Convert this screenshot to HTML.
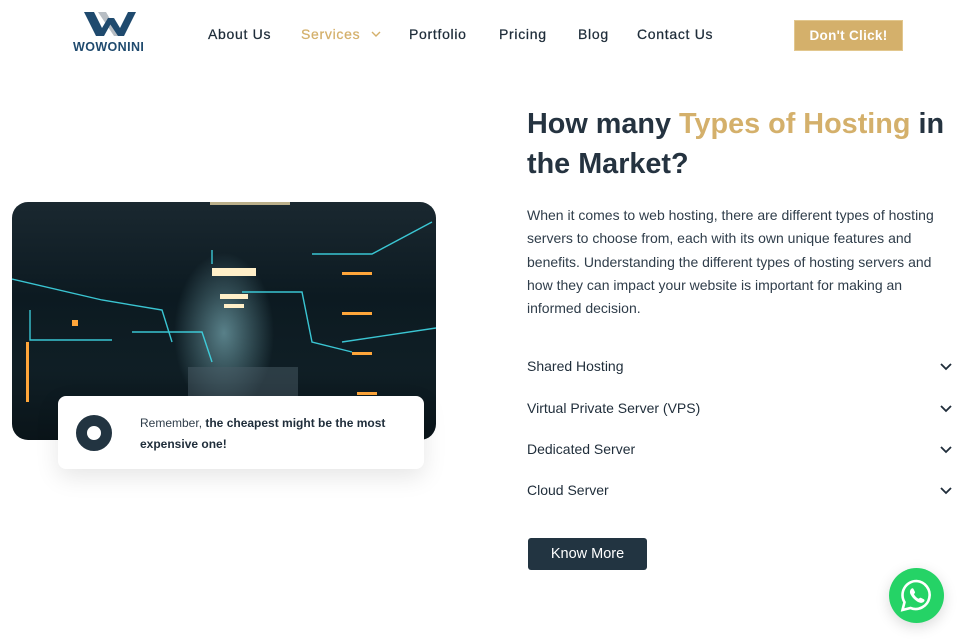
<!DOCTYPE html>
<html><head><meta charset="utf-8"><style>
*{margin:0;padding:0;box-sizing:border-box}
body{width:960px;height:640px;overflow:hidden;background:#fff;font-family:"Liberation Sans",sans-serif;position:relative;color:#1f2d3a}
.nav a{position:absolute;top:26px;font-size:14px;color:#1f2d3a;letter-spacing:.7px;text-decoration:none;-webkit-text-stroke:.25px #1f2d3a}
.btn{position:absolute;left:794px;top:20px;width:109px;height:31px;background:#d4b06b;border:1px solid #e2c78e;color:#fff;font-weight:bold;font-size:13.5px;text-align:center;line-height:30px;letter-spacing:.3px}
h1{position:absolute;left:527px;top:104px;font-size:28.8px;line-height:40px;font-weight:bold;color:#253340;width:430px}
h1 span{color:#d4b06b}
.p{position:absolute;left:527px;top:204px;width:410px;font-size:14px;line-height:23.3px;color:#2f3d4a}
.acc{position:absolute;left:527px;font-size:14px;color:#1f2d3a;width:425px}
.acc svg{position:absolute;right:0;top:5px}
.km{position:absolute;left:528px;top:538px;width:119px;height:32px;background:#223441;border-radius:3px;color:#fff;font-size:14.5px;text-align:center;line-height:32px}
.img{position:absolute;left:12px;top:202px;width:424px;height:238px;border-radius:16px;overflow:hidden;
background:radial-gradient(ellipse 50px 80px at 50% 55%,rgba(150,210,220,.55),transparent),linear-gradient(180deg,#1a2830 0%,#0c1a21 40%,#15293161 70%,#0a1419 100%),#0c181e}
.card{position:absolute;left:58px;top:396px;width:366px;height:73px;background:#fff;border-radius:8px;box-shadow:0 8px 24px rgba(0,0,0,.1)}
.wa{position:absolute;left:889px;top:568px;width:55px;height:55px;border-radius:50%;background:#25d366;box-shadow:0 4px 14px rgba(0,0,0,.15)}
</style></head><body>
<svg style="position:absolute;left:84px;top:12px" width="52" height="24" viewBox="0 0 52 24">
<polygon points="14,0 30,24 36,24 22,0" fill="#b8bec4"/>
<polygon points="0,0 10,0 18,16 24,6 30,6 20,24 12,24" fill="#1f4a6e"/>
<polygon points="26,12 30,6 36,16 44,0 52,0 40,24 34,24" fill="#1f4a6e"/>
</svg>
<div style="position:absolute;left:73px;top:40px;font-size:12.5px;font-weight:bold;color:#1f4a6e;letter-spacing:.4px">WOWONINI</div>
<div class="nav">
<a style="left:208px">About Us</a>
<a style="left:301px;color:#d4b06b;-webkit-text-stroke:.25px #d4b06b">Services</a>
<a style="left:409px">Portfolio</a>
<a style="left:499px">Pricing</a>
<a style="left:578px">Blog</a>
<a style="left:637px">Contact Us</a>
</div>
<svg style="position:absolute;left:371px;top:31px" width="10" height="7" viewBox="0 0 10 7"><path d="M1 1l4 4 4-4" stroke="#d4b06b" stroke-width="1.4" fill="none"/></svg>
<div class="btn">Don't Click!</div>
<div class="img">
<svg width="424" height="238" style="position:absolute;left:0;top:0">
<rect x="198" y="0" width="80" height="3" fill="#ffe8b0" opacity=".7"/>
<rect x="200" y="66" width="44" height="8" fill="#ffefc8"/>
<rect x="208" y="92" width="28" height="5" fill="#ffefc8"/>
<rect x="212" y="102" width="20" height="4" fill="#ffefc8"/>
<rect x="176" y="165" width="110" height="40" fill="#4a5c66" opacity=".5"/>
<g stroke="#3fd8e6" stroke-width="1.4" fill="none" opacity=".9">
<path d="M0 77 L90 98 L150 108 L160 140"/><path d="M18 108 L18 138 L100 138"/>
<path d="M300 52 L360 52 L420 20"/><path d="M330 140 L424 126"/>
<path d="M200 48 L200 62 M230 90 L290 90 L300 140 L340 150"/>
<path d="M120 130 L190 130 L200 160"/>
</g>
<g fill="#ffa63a">
<rect x="330" y="70" width="30" height="3"/><rect x="330" y="110" width="30" height="3"/><rect x="340" y="150" width="20" height="3"/>
<rect x="60" y="118" width="6" height="6"/><rect x="14" y="140" width="3" height="60"/><rect x="345" y="190" width="20" height="3"/>
</g>
</svg>
</div>
<div class="card">
<div style="position:absolute;left:18px;top:19px;width:36px;height:36px;border-radius:50%;border:11px solid #223441"></div>
<div style="position:absolute;left:82px;top:17px;font-size:12px;line-height:20.5px;color:#2f3d4a;width:270px">Remember, <b style="color:#1f2d3a">the cheapest might be the most expensive one!</b></div>
</div>
<h1>How many <span>Types of Hosting</span> in the Market?</h1>
<div class="p">When it comes to web hosting, there are different types of hosting servers to choose from, each with its own unique features and benefits. Understanding the different types of hosting servers and how they can impact your website is important for making an informed decision.</div>
<div class="acc" style="top:358px">Shared Hosting<svg width="12" height="8" viewBox="0 0 12 8"><path d="M1 1l5 5 5-5" stroke="#1f2d3a" stroke-width="1.8" fill="none"/></svg></div>
<div class="acc" style="top:400px">Virtual Private Server (VPS)<svg width="12" height="8" viewBox="0 0 12 8"><path d="M1 1l5 5 5-5" stroke="#1f2d3a" stroke-width="1.8" fill="none"/></svg></div>
<div class="acc" style="top:441px">Dedicated Server<svg width="12" height="8" viewBox="0 0 12 8"><path d="M1 1l5 5 5-5" stroke="#1f2d3a" stroke-width="1.8" fill="none"/></svg></div>
<div class="acc" style="top:482px">Cloud Server<svg width="12" height="8" viewBox="0 0 12 8"><path d="M1 1l5 5 5-5" stroke="#1f2d3a" stroke-width="1.8" fill="none"/></svg></div>
<div class="km">Know More</div>
<div class="wa"><svg width="55" height="55" viewBox="0 0 55 55">
<path d="M27.5 13a14 14 0 0 0-12 21.2L13.5 42l8-2a14 14 0 1 0 6-27z" fill="none" stroke="#fff" stroke-width="2.6"/>
<path d="M22 21c1-1 2-1 2.5 0l1.5 3c.3.8-.8 1.8-1 2.2 1 2 2.6 3.6 4.6 4.6.4-.3 1.4-1.4 2.2-1l3 1.5c1 .5 1 1.5 0 2.5-1.5 1.5-4 1.5-7-.5s-5-4.5-6.3-7c-1-2.2-.5-4 .5-5.3z" fill="#fff"/>
</svg></div>
</body></html>
